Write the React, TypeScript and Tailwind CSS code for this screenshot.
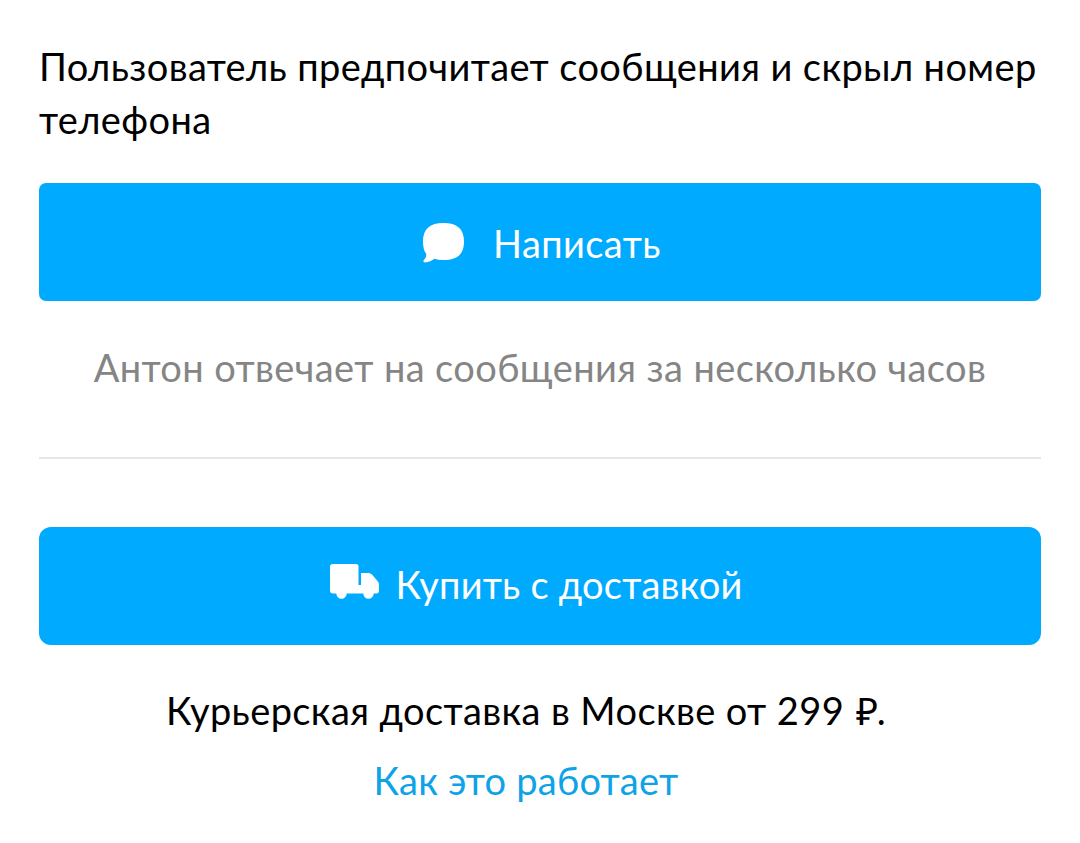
function ChatIcon() {
  return (
    <svg className="mt-px" width="41" height="40" viewBox="0 0 41 40" fill="currentColor" aria-hidden="true">
      <path d="M20.500 0C34 0 41 5.500 41 18.500S34 37 20.500 37C17 37 14 36.700 11.500 35.800C9 37.500 5.500 39.500 2 39.500C0 39.500 0 38 1.200 36.500C3 34.500 3.500 33 3.200 30.800C1 28 0 24 0 18.500C0 5.500 7 0 20.500 0Z" />
    </svg>
  );
}

function TruckIcon() {
  return (
    <svg className="mb-[9px]" width="50" height="36" viewBox="0 0 50 36" fill="currentColor" aria-hidden="true">
      <path d="M3 0H26Q28.500 0 28.500 2.500V21H31V9H38.500Q40.500 9 42 10.500L47.500 17Q49 18.500 49 20.500V26.500Q49 29.500 46.500 29.500H43.700A5.200 5.200 0 1 1 33.300 29.500H16.700A5.200 5.200 0 1 1 6.300 29.500H3Q0 29.500 0 26.500V2.500Q0 0 3 0Z" />
    </svg>
  );
}

export default function App() {
  return (
    <main className="h-[843px] w-[1080px] bg-white px-[39px] pt-10 font-['Lato',sans-serif] text-[38px] leading-[53px] tracking-[0.4px] text-black">
      <p className="tracking-[0.38px]">Пользователь предпочитает сообщения и скрыл номер телефона</p>
      <button className="mt-[37px] flex h-[118px] w-full items-center justify-center gap-[29px] rounded-[7px] bg-[#00aaff] pl-1 text-white">
        <ChatIcon />
        <span className="pt-0.5">Написать</span>
      </button>
      <p className="mt-10 text-center text-[#858585]">Антон отвечает на сообщения за несколько часов</p>
      <hr className="mt-[63px] border-t-2 border-[#e6e6e6]" />
      <button className="mt-[68px] flex h-[118px] w-full items-center justify-center gap-[16px] rounded-[12px] bg-[#00aaff] pr-2 text-white">
        <TruckIcon />
        <span className="pb-1 tracking-[0.2px]">Купить с доставкой</span>
      </button>
      <p className="mt-[39px] pr-7 text-center">
        Курьерская доставка в Москве от 299 <span className="ml-0.5 -mr-0.5">₽</span>.
      </p>
      <a className="mt-[17px] block pr-7 text-center tracking-[0.25px] text-[#0ea2e7]">Как это работает</a>
    </main>
  );
}
